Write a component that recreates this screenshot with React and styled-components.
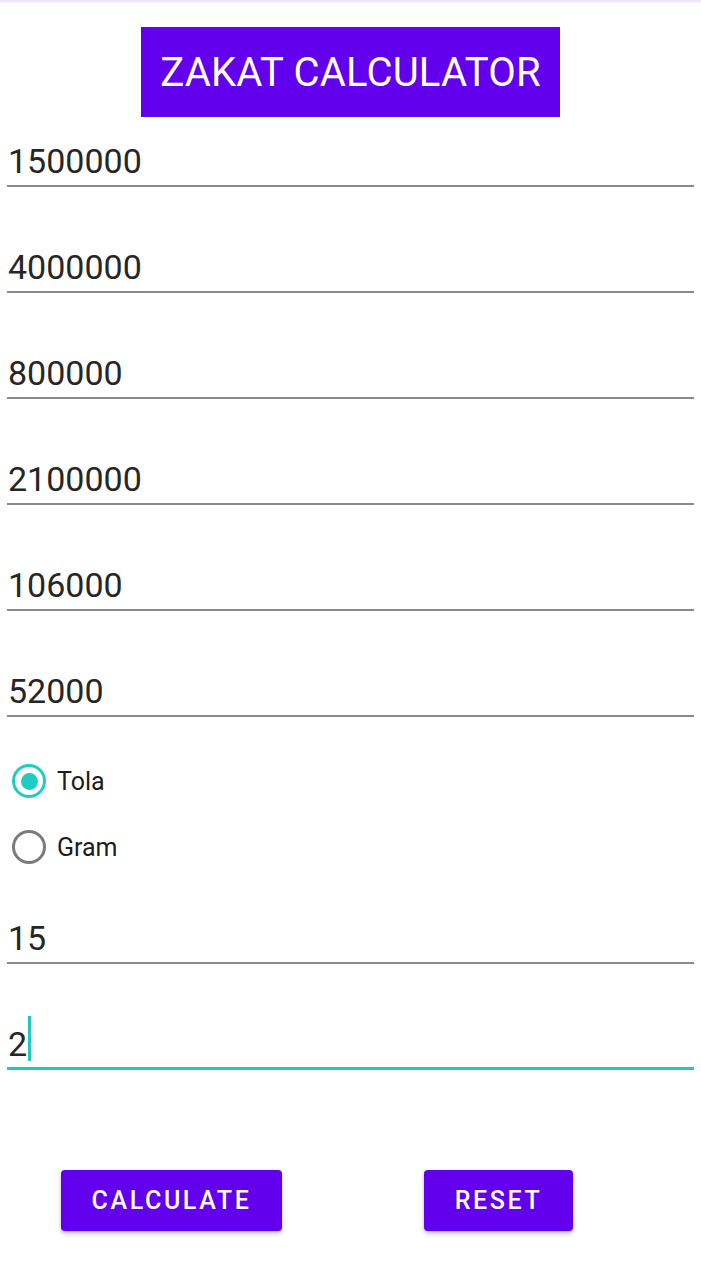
import React from 'react';
import styled, { createGlobalStyle } from 'styled-components';

const GlobalStyle = createGlobalStyle`
  body {
    margin: 0;
    background: #ffffff;
    font-family: Roboto, 'Noto Sans', sans-serif;
  }
`;

const Page = styled.div`
  width: 701px;
  min-height: 1280px;
  display: flex;
  flex-direction: column;
  background: #fff;
`;

const TopShade = styled.div`
  height: 3px;
  background: linear-gradient(#ece2fb, #f8f4fe);
`;

const Title = styled.h1`
  align-self: center;
  margin: 24px 0 0;
  width: 419px;
  height: 90px;
  display: flex;
  align-items: center;
  justify-content: center;
  background: #6200ee;
  color: #fff;
  font-size: 40px;
  font-weight: 400;
  letter-spacing: 0.2px;
`;

const Field = styled.div`
  box-sizing: border-box;
  height: 68px;
  margin: ${({ $top }) => $top}px 7px 0;
  padding: 0 0 ${({ $active }) => ($active ? 3 : 4)}px 1px;
  display: flex;
  align-items: flex-end;
  border-bottom: ${({ $active }) => ($active ? '3px solid #1fc9bd' : '2px solid #8a8a8a')};
  font-size: 34px;
  line-height: 40px;
  color: #262626;
`;

const Caret = styled.span`
  display: inline-block;
  width: 3px;
  height: 45px;
  margin-left: 1px;
  margin-bottom: 3px;
  background: #1fc9bd;
`;

const RadioGroup = styled.div`
  display: flex;
  flex-direction: column;
  margin-top: 31px;
`;

const RadioRow = styled.label`
  height: 66px;
  display: flex;
  align-items: center;
  gap: 11px;
  padding-left: 12px;
  font-size: 25px;
  color: #1c1c1c;
`;

const Circle = styled.span`
  box-sizing: border-box;
  width: 34px;
  height: 34px;
  border-radius: 50%;
  border: 3px solid ${({ $checked }) => ($checked ? '#1fcdc0' : '#7a7a7a')};
  display: flex;
  align-items: center;
  justify-content: center;

  &::after {
    content: '';
    width: 17px;
    height: 17px;
    border-radius: 50%;
    background: ${({ $checked }) => ($checked ? '#1fcdc0' : 'transparent')};
  }
`;

const Buttons = styled.div`
  display: flex;
  margin-top: 100px;
  padding-left: 61px;
`;

const Button = styled.button`
  box-sizing: border-box;
  width: ${({ $w }) => $w}px;
  height: 61px;
  margin-right: ${({ $gap }) => $gap || 0}px;
  padding: 0;
  border: none;
  border-radius: 4px;
  background: #6200ee;
  color: #fff;
  font-family: Roboto, sans-serif;
  font-size: 25px;
  font-weight: 500;
  letter-spacing: 2.6px;
  box-shadow: 0 3px 5px rgba(0, 0, 0, 0.2), 0 1px 2px rgba(0, 0, 0, 0.15);
`;

const values = ['1500000', '4000000', '800000', '2100000', '106000', '52000'];

export default function App() {
  return (
    <Page>
      <GlobalStyle />
      <TopShade />
      <Title>ZAKAT CALCULATOR</Title>
      {values.map((v, i) => (
        <Field key={v} $top={i === 0 ? 2 : 38}>
          {v}
        </Field>
      ))}
      <RadioGroup>
        <RadioRow>
          <Circle $checked />
          Tola
        </RadioRow>
        <RadioRow>
          <Circle />
          Gram
        </RadioRow>
      </RadioGroup>
      <Field $top={16}>15</Field>
      <Field $top={38} $active>
        2
        <Caret />
      </Field>
      <Buttons>
        <Button $w={221} $gap={142}>CALCULATE</Button>
        <Button $w={149}>RESET</Button>
      </Buttons>
    </Page>
  );
}
